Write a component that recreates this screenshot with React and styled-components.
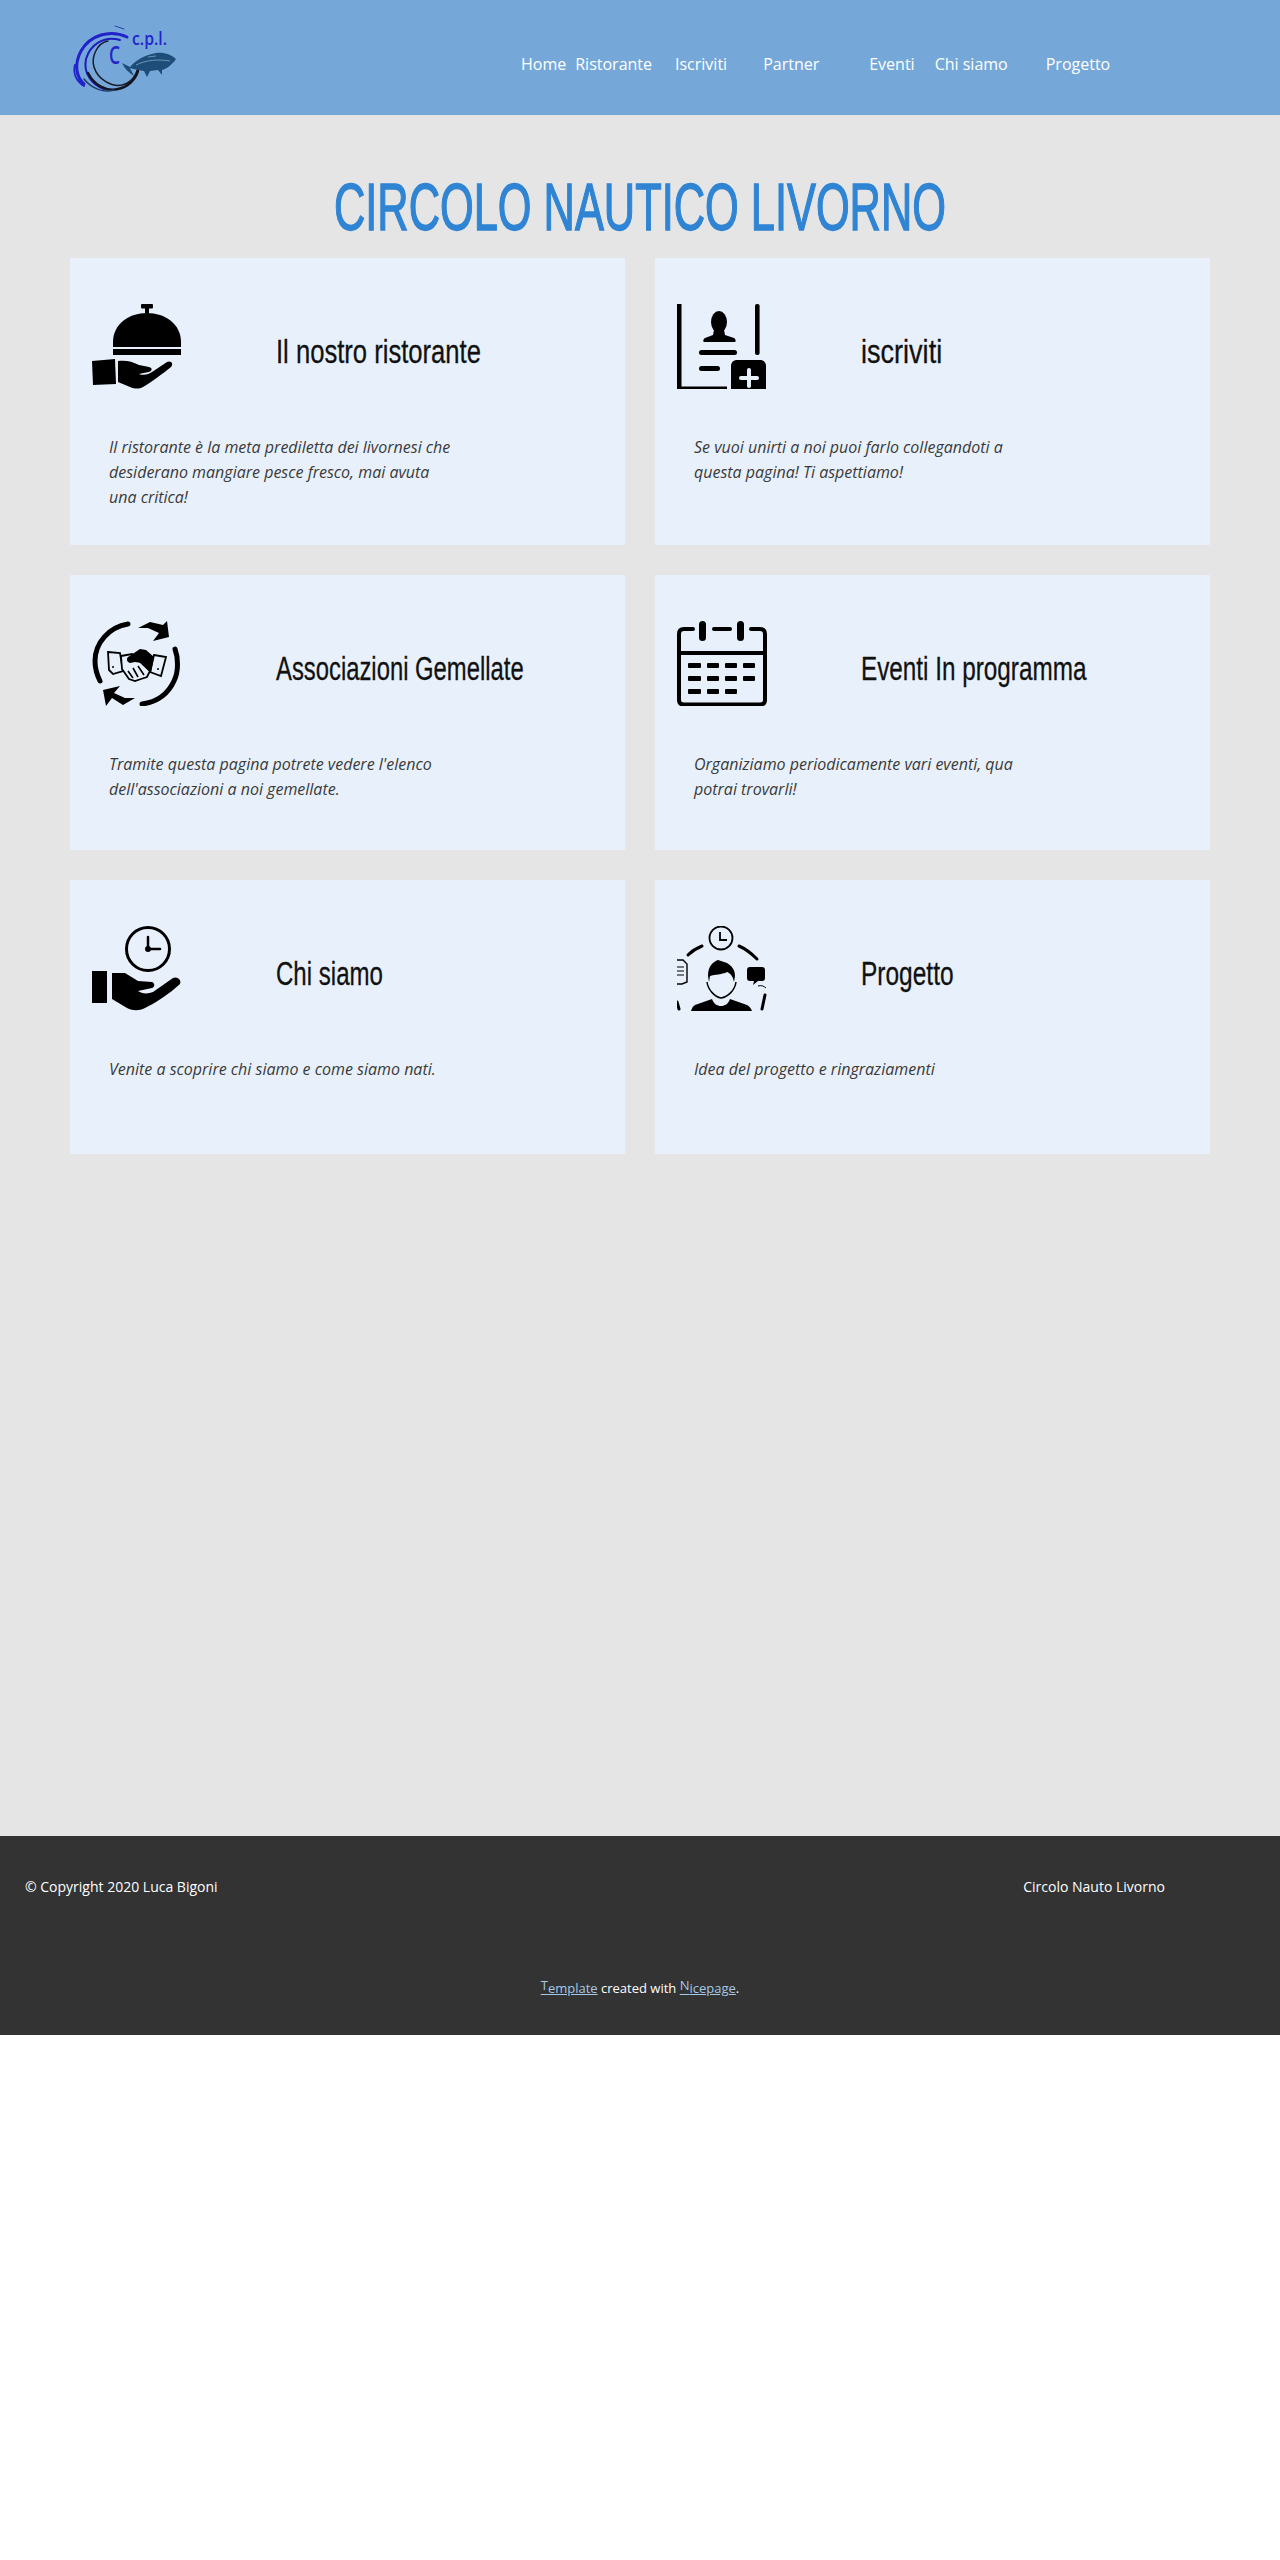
import React from "react";
import styled, { createGlobalStyle } from "styled-components";

const GlobalStyle = createGlobalStyle`
  html, body {
    margin: 0;
    padding: 0;
    background: #fff;
    font-family: "Open Sans", sans-serif;
  }
`;

const Header = styled.header`
  display: flex;
  align-items: flex-start;
  height: 115px;
  padding-left: 60px;
  padding-top: 15px;
  box-sizing: border-box;
  background: #75a8d9;
`;
const LogoSvg = styled.svg`
  width: 130px;
  height: 85px;
  flex: none;
`;
const Nav = styled.nav`
  display: flex;
  margin-left: 331px;
  padding-top: 36px;
`;
const NavLink = styled.a`
  color: #fff;
  font-size: 16px;
  line-height: 26px;
  margin-left: ${(props) => props.$left}px;
  white-space: nowrap;
`;

const Main = styled.main`
  height: 1721px;
  box-sizing: border-box;
  background: #e5e5e5;
  padding: 0 70px;
`;
const Title = styled.h1`
  margin: 0;
  height: 143px;
  display: flex;
  justify-content: center;
  align-items: flex-end;
  font-family: "Liberation Sans", sans-serif;
  font-weight: 400;
  font-size: 66px;
  line-height: 101px;
  color: #2f84d3;
  white-space: nowrap;
  -webkit-text-stroke: 1.4px #2f84d3;
  transform: scaleX(0.657);
`;
const Grid = styled.div`
  display: grid;
  grid-template-columns: 555px 555px;
  grid-template-rows: 287px 275px 274px;
  column-gap: 30px;
  row-gap: 30px;
`;
const Card = styled.section`
  background: #e8f1fb;
  padding: 46px 0 0 22px;
  box-sizing: border-box;
`;
const CardHead = styled.div`
  display: flex;
  align-items: center;
  height: 85px;
`;
const IconSvg = styled.svg`
  width: 90px;
  height: 85px;
  flex: none;
  align-self: flex-start;
  overflow: hidden;
`;
const CardTitle = styled.h3`
  margin: 10px 0 0 94px;
  font-family: "Liberation Sans", sans-serif;
  font-weight: 400;
  font-size: 33px;
  line-height: 44px;
  color: #111;
  white-space: nowrap;
  -webkit-text-stroke: 0.3px #111;
  transform-origin: left center;
  transform: scaleX(${(props) => props.$squeeze});
`;
const CardText = styled.p`
  margin: 46px 0 0 17px;
  width: 350px;
  font-style: italic;
  font-size: 16px;
  line-height: 25px;
  color: #3a3a3a;
`;

const Footer = styled.footer`
  height: 199px;
  box-sizing: border-box;
  background: #333;
  color: #fff;
  font-size: 14px;
  padding-top: 39px;
`;
const FooterRow = styled.div`
  display: flex;
  justify-content: space-between;
  padding: 0 115px 0 25px;
  line-height: 24px;
`;
const Credit = styled.p`
  margin: 74px 0 0;
  text-align: center;
  font-size: 13px;
  line-height: 24px;
`;
const CreditLink = styled.a`
  color: #a5c8e8;
  text-decoration: underline;
`;
const RaisedCap = styled.span`
  vertical-align: 3px;
`;

const Logo = () => (
  <LogoSvg viewBox="0 0 130 85">
    <g fill="none" strokeLinecap="round">
      <path d="M67 22 C50 14 30 20 21 36 C14 49 16 62 24 69" stroke="#2222cc" strokeWidth="3" />
      <path d="M15 50 C13 58 16 66 24 71" stroke="#2222cc" strokeWidth="2" />
      <path d="M60 25 C44 20 30 30 26 44 C23 58 32 70 44 74" stroke="#1d1dc0" strokeWidth="2" />
      <path d="M48 26 C37 28 31 42 34 52 C38 65 52 72 62 70 C70 68 76 62 78 52" stroke="#1a1a2a" strokeWidth="1.5" />
      <path d="M28 58 C34 70 46 77 58 74 C68 72 76 64 78 56" stroke="#15151f" strokeWidth="2.5" />
      <path d="M24 64 C32 74 44 78 54 75" stroke="#223a66" strokeWidth="1.5" />
      <path d="M55 11 L64 14" stroke="#2a3fb0" strokeWidth="1" />
    </g>
    <text x="49" y="49" fontFamily="Open Sans, sans-serif" fontSize="26" fontWeight="600" fill="#2424c8" textLength="11" lengthAdjust="spacingAndGlyphs">C</text>
    <text x="72" y="30" fontFamily="Open Sans, sans-serif" fontSize="18" fontWeight="600" fill="#2424c8" textLength="35" lengthAdjust="spacingAndGlyphs">c.p.l.</text>
    <path d="M62 48 L70 52 C75 46 84 40 96 38 C104 37 112 40 116 44 C112 50 106 54 102 55 L102 60 L98 55 L90 56 L87 62 L84 56 C78 55 73 54 70 53 L74 61 C69 58 65 54 62 48 Z" fill="#1d4d78" />
    <path d="M76 50 C86 45 98 44 110 46 M88 42 L96 41" stroke="#7fa6c8" strokeWidth="0.8" fill="none" />
  </LogoSvg>
);

const CoverIcon = () => (
  <IconSvg viewBox="0 0 90 85">
    <rect x="49" y="0" width="12" height="4.5" rx="1" />
    <rect x="53" y="4" width="4" height="5" />
    <path d="M21 43 V38 C21 20 37 9 55 9 C73 9 89 20 89 38 V43 Z" />
    <rect x="21" y="45" width="68" height="6" />
    <path d="M0 57 L23 55 L24 80 L1 81 Z" />
    <path d="M26 57 C33 56 40 57 47 61 L57 63 C61 64 60 67 57 68 C53 69 50 69 47 70 C52 72 57 70 60 68 L75 58 C79 56 82 60 79 63 C70 70 60 78 51 83 C47 85 43 85 38 83 L26 78 Z" />
  </IconSvg>
);

const SignupIcon = () => (
  <IconSvg viewBox="0 0 90 85">
    <path d="M0 0 H4.5 V82.5 H50 V85 H0 Z" />
    <rect x="78" y="0" width="4.6" height="51" rx="2" />
    <ellipse cx="42" cy="18" rx="8" ry="11" />
    <path d="M37 26 H47 L48 31 L57 34 C59 35 59 38 58 38 H27 C26 38 26 35 28 34 L36 31 Z" />
    <rect x="22" y="46" width="38" height="5" rx="2.5" />
    <rect x="22" y="62" width="21" height="5" rx="2.5" />
    <path d="M54 85 V62 C54 58 57 56 60 56 H83 C86 56 89 58 89 62 V85 Z" />
    <rect x="62" y="72" width="20" height="4" rx="2" fill="#e8f1fb" />
    <rect x="70" y="64" width="4" height="20" rx="2" fill="#e8f1fb" />
  </IconSvg>
);

const HandshakeIcon = () => (
  <IconSvg viewBox="0 0 90 85">
    <g fill="none" stroke="#000" strokeLinecap="round">
      <path d="M36 3 C17 6 3 22 3 40 C3 47 5 54 8 60" strokeWidth="5" />
      <path d="M83 28 C86 36 87 50 82 60 C76 73 65 81 50 83" strokeWidth="5" />
    </g>
    <path d="M46 7 L58 1 L71 4 L75 0 L77 16 L61 20 L67 12 L56 7 Z" />
    <path d="M43 77 L31 84 L20 77 L14 85 L11 69 L28 65 L22 72 L33 77 Z" />
    <path d="M16 31 L28 32 L31 50 L21 53 L17 49 Z" fill="#e8f1fb" stroke="#000" strokeWidth="1.8" />
    <path d="M62 34 L74 36 L69 55 L58 51 Z" fill="#e8f1fb" stroke="#000" strokeWidth="1.8" />
    <path d="M29 35 L40 33 L58 50 L55 56 L49 58 L43 60 L37 58 L30 48 Z" fill="#e8f1fb" stroke="#000" strokeWidth="1.8" />
    <path d="M36 50 L41 57 M41 47 L46 56 M46 45 L52 54" stroke="#000" strokeWidth="1.6" />
    <path d="M36 36 L48 28 L54 29 L62 36 L59 52 L50 42 L43 41 L38 42 C35 41 34 38 36 36 Z" />
    <circle cx="21" cy="46" r="1" />
    <circle cx="66" cy="48" r="1" />
  </IconSvg>
);

const calendarDashes = [
  [11, 42, 13], [30, 42, 12], [48, 42, 12], [66, 42, 12],
  [11, 55, 13], [30, 55, 12], [48, 55, 12], [66, 55, 12],
  [11, 68, 13], [30, 68, 12], [48, 68, 12],
];

const CalendarIcon = () => (
  <IconSvg viewBox="0 0 90 85">
    <path d="M16 8 H7 C3.5 8 2 10 2 13 V79 C2 82 3.5 83.5 7 83.5 H83 C86.5 83.5 88 82 88 79 V13 C88 10 86.5 8 83 8 H74" fill="none" stroke="#000" strokeWidth="4" strokeLinecap="round" />
    <rect x="22" y="0" width="7" height="20" rx="3.5" />
    <rect x="60" y="0" width="7" height="20" rx="3.5" />
    <rect x="35" y="6" width="20" height="4" rx="2" />
    <rect x="2" y="30" width="86" height="4" />
    {calendarDashes.map(([x, y, w]) => (
      <rect key={`${x}-${y}`} x={x} y={y} width={w} height="5" rx="1" />
    ))}
  </IconSvg>
);

const TimeHandIcon = () => (
  <IconSvg viewBox="0 0 90 85">
    <circle cx="56" cy="23" r="21.5" fill="none" stroke="#000" strokeWidth="3" />
    <path d="M56 11 V23 H68" fill="none" stroke="#000" strokeWidth="2.5" strokeLinecap="round" />
    <circle cx="56" cy="23" r="3" />
    <rect x="0" y="45" width="15" height="32" />
    <path d="M20 47 H33 L46 55 L60 56 C63 57 63 61 60 62 L46 65 C50 68 56 68 61 66 L81 52 C85 50 90 54 88 58 C77 68 65 76 53 82 C47 85 41 85 35 82 L20 73 Z" />
  </IconSvg>
);

const ProjectIcon = () => (
  <IconSvg viewBox="0 0 90 85">
    <circle cx="44" cy="12" r="11.5" fill="none" stroke="#000" strokeWidth="1.8" />
    <path d="M43 6 V14 H50" fill="none" stroke="#000" strokeWidth="1.8" />
    <g fill="none" stroke="#000" strokeWidth="3" strokeLinecap="round">
      <path d="M11 29 C15 25 20 22 25 20" />
      <path d="M62 20 C69 23 75 28 80 33" />
      <path d="M88 69 L85 83" />
      <path d="M0 76 L2 83" />
    </g>
    <path d="M31 50 C31 40 36 36 41 34 L50 37 C55 40 58 44 58 50 L57 56 C56 50 53 47 50 46 C45 49 38 48 33 50 L32 56 Z" />
    <path d="M30 56 C31 64 38 71 44 72 C51 71 58 64 59 56" fill="none" stroke="#000" strokeWidth="1.5" />
    <path d="M14 85 C15 82 16 80 18 79 L35 73 C37 78 40 80 44 80 C48 80 51 78 53 73 L70 79 C72 80 74 82 75 85 Z" />
    <path d="M0 34 H6 L10 38 V56 L5 58 H0" fill="#e8f1fb" stroke="#000" strokeWidth="1.4" />
    <path d="M0 41 H7 M0 45 H7 M0 49 H7" stroke="#000" strokeWidth="1.2" />
    <path d="M73 41 H85 C87 41 88 42 88 44 V52 C88 54 87 55 85 55 H81 L76 59 L77 55 H73 C71 55 70 54 70 52 V44 C70 42 71 41 73 41 Z" />
    <path d="M81 60 C84 59 87 60 89 62" fill="none" stroke="#000" strokeWidth="1" />
  </IconSvg>
);

const navItems = [
  { label: "Home", left: 0 },
  { label: "Ristorante", left: 9 },
  { label: "Iscriviti", left: 23 },
  { label: "Partner", left: 36 },
  { label: "Eventi", left: 50 },
  { label: "Chi siamo", left: 20 },
  { label: "Progetto", left: 38 },
];

const cards = [
  {
    icon: <CoverIcon />,
    title: "Il nostro ristorante",
    squeeze: 0.776,
    text: "Il ristorante è la meta prediletta dei livornesi che desiderano mangiare pesce fresco, mai avuta una critica!",
  },
  {
    icon: <SignupIcon />,
    title: "iscriviti",
    squeeze: 0.82,
    text: "Se vuoi unirti a noi puoi farlo collegandoti a questa pagina! Ti aspettiamo!",
  },
  {
    icon: <HandshakeIcon />,
    title: "Associazioni Gemellate",
    squeeze: 0.722,
    text: "Tramite questa pagina potrete vedere l'elenco dell'associazioni a noi gemellate.",
  },
  {
    icon: <CalendarIcon />,
    title: "Eventi In programma",
    squeeze: 0.736,
    text: "Organiziamo periodicamente vari eventi, qua potrai trovarli!",
  },
  {
    icon: <TimeHandIcon />,
    title: "Chi siamo",
    squeeze: 0.729,
    text: "Venite a scoprire chi siamo e come siamo nati.",
  },
  {
    icon: <ProjectIcon />,
    title: "Progetto",
    squeeze: 0.742,
    text: "Idea del progetto e ringraziamenti",
  },
];

export default function App() {
  return (
    <>
      <GlobalStyle />
      <Header>
        <Logo />
        <Nav>
          {navItems.map((item) => (
            <NavLink key={item.label} $left={item.left}>
              {item.label}
            </NavLink>
          ))}
        </Nav>
      </Header>
      <Main>
        <Title>CIRCOLO NAUTICO LIVORNO</Title>
        <Grid>
          {cards.map((card) => (
            <Card key={card.title}>
              <CardHead>
                {card.icon}
                <CardTitle $squeeze={card.squeeze}>{card.title}</CardTitle>
              </CardHead>
              <CardText>{card.text}</CardText>
            </Card>
          ))}
        </Grid>
      </Main>
      <Footer>
        <FooterRow>
          <span>© Copyright 2020 Luca Bigoni</span>
          <span>Circolo Nauto Livorno</span>
        </FooterRow>
        <Credit>
          <CreditLink>
            <RaisedCap>T</RaisedCap>emplate
          </CreditLink>{" "}
          created with{" "}
          <CreditLink>
            <RaisedCap>N</RaisedCap>icepage
          </CreditLink>
          .
        </Credit>
      </Footer>
    </>
  );
}
